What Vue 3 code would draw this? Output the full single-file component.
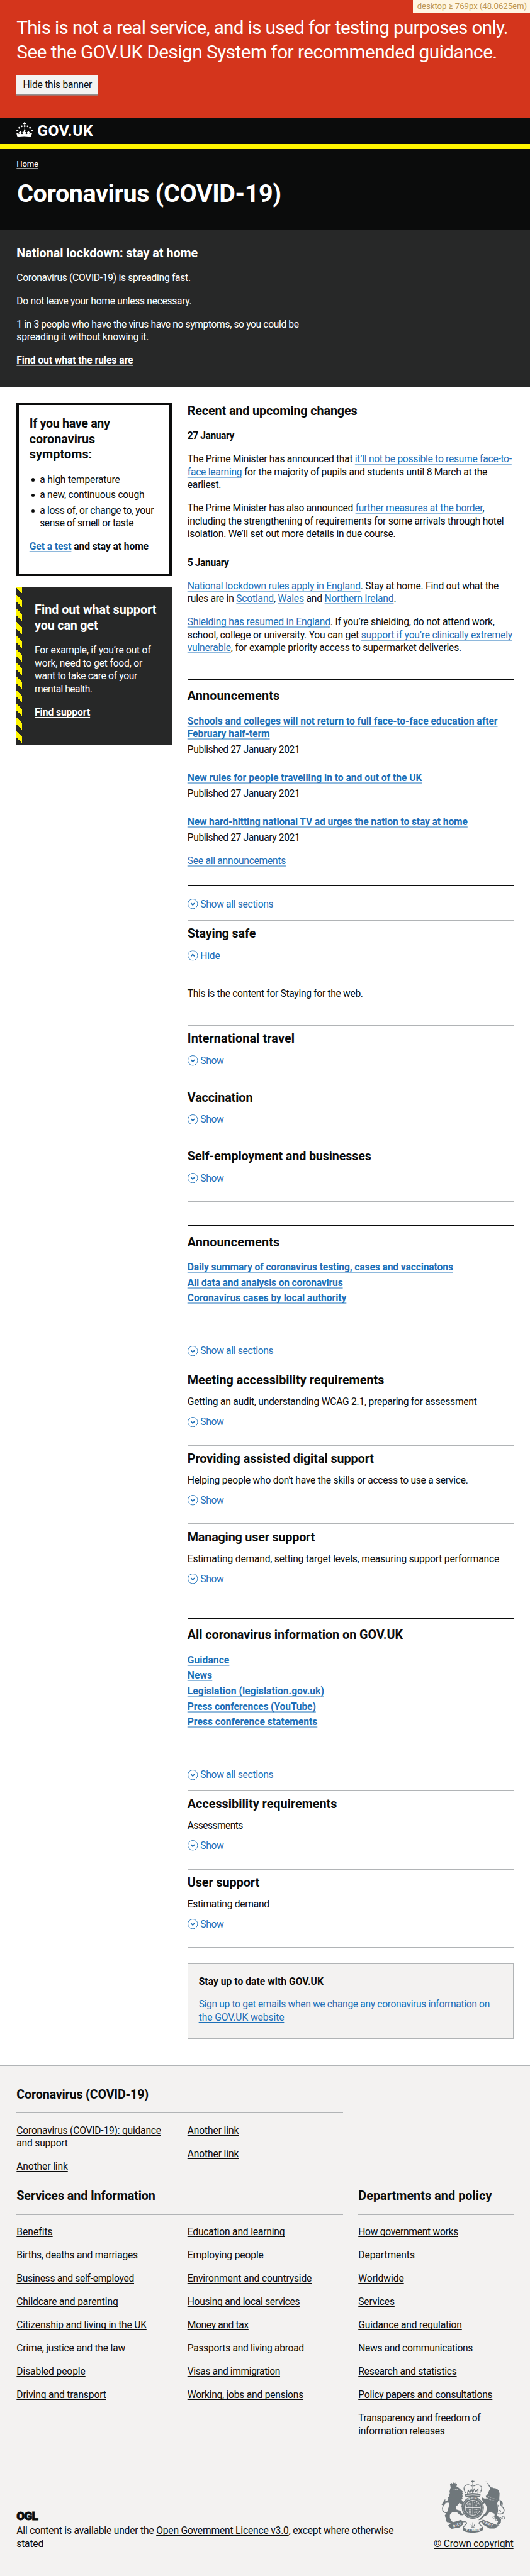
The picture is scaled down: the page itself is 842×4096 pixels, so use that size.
<script setup>
// Tracks a line of text so that it sets to a given measure (in design units, 10 to the rem).
const vFit = {
  mounted(el, binding) {
    const unit = parseFloat(getComputedStyle(document.documentElement).fontSize) / 10
    const natural = el.getBoundingClientRect().width
    const spacing = (binding.value * unit - natural) / el.textContent.trim().length
    el.style.letterSpacing = spacing.toFixed(3) + 'px'
  },
}

const announcements = [
  { lines: [['Schools and colleges will not return to full face-to-face education after', 599], ['February half-term', 159]] },
  { lines: [['New rules for people travelling in to and out of the UK', 453]] },
  { lines: [['New hard-hitting national TV ad urges the nation to stay at home', 541]] },
]

const groups = [
  {
    kind: 'first',
    sections: [
      { title: ['Staying safe', 132], open: true, content: ['This is the content for Staying for the web.', 339] },
      { title: ['International travel', 207] },
      { title: ['Vaccination', 126] },
      { title: ['Self-employment and businesses', 355] },
    ],
  },
  {
    kind: 'second',
    heading: ['Announcements', 178],
    links: [
      ['Daily summary of coronavirus testing, cases and vaccinatons', 513],
      ['All data and analysis on coronavirus', 300],
      ['Coronavirus cases by local authority', 307],
    ],
    sections: [
      { title: ['Meeting accessibility requirements', 380], summary: ['Getting an audit, understanding WCAG 2.1, preparing for assessment', 559] },
      { title: ['Providing assisted digital support', 360], summary: ["Helping people who don't have the skills or access to use a service.", 542] },
      { title: ['Managing user support', 246], summary: ['Estimating demand, setting target levels, measuring support performance', 602] },
    ],
  },
  {
    kind: 'third',
    heading: ['All coronavirus information on GOV.UK', 416],
    links: [
      ['Guidance', 81],
      ['News', 48],
      ['Legislation (legislation.gov.uk)', 264],
      ['Press conferences (YouTube)', 248],
      ['Press conference statements', 251],
    ],
    sections: [
      { title: ['Accessibility requirements', 289], summary: ['Assessments', 107] },
      { title: ['User support', 139], summary: ['Estimating demand', 158] },
    ],
  },
]

const covidLinks = [
  [[['Coronavirus (COVID-19): guidance', 279], ['and support', 99]], [['Another link', 99]]],
  [[['Another link', 99]], [['Another link', 99]]],
]

const serviceLinks = [
  [
    ['Benefits', 69], ['Births, deaths and marriages', 234], ['Business and self-employed', 227], ['Childcare and parenting', 196],
    ['Citizenship and living in the UK', 251], ['Crime, justice and the law', 210], ['Disabled people', 133], ['Driving and transport', 173],
  ],
  [
    ['Education and learning', 188], ['Employing people', 147], ['Environment and countryside', 240], ['Housing and local services', 217],
    ['Money and tax', 118], ['Passports and living abroad', 225], ['Visas and immigration', 179], ['Working, jobs and pensions', 224],
  ],
]

const departmentLinks = [
  [['How government works', 193]], [['Departments', 109]], [['Worldwide', 88]], [['Services', 70]],
  [['Guidance and regulation', 200]], [['News and communications', 221]], [['Research and statistics', 190]],
  [['Policy papers and consultations', 259]], [['Transparency and freedom of', 236], ['information releases', 167]],
]
</script>

<template>
  <div class="page">
    <div class="breakpoint"><span v-fit="212">desktop ≥ 769px (48.0625em)</span></div>

    <div class="banner">
      <p>
        <span v-fit="949" class="line">This is not a real service, and is used for testing purposes only.</span>
        <span v-fit="928" class="line">See the <a>GOV.UK Design System</a> for recommended guidance.</span>
      </p>
      <button type="button"><span v-fit="133">Hide this banner</span></button>
    </div>

    <header class="header">
      <svg class="crown" viewBox="96 77 96 90" aria-hidden="true">
        <g fill="#fff">
          <path d="M141 77h6l-1 6 7-1v7l-7-1 1 8h-6l1-8-7 1v-7l7 1z" />
          <circle cx="144" cy="101" r="5.5" />
          <circle cx="127" cy="102" r="5.3" /><circle cx="113" cy="111" r="5.3" /><circle cx="102" cy="126" r="5.3" />
          <circle cx="161" cy="102" r="5.3" /><circle cx="175" cy="111" r="5.3" /><circle cx="186" cy="126" r="5.3" />
          <circle cx="144" cy="112" r="3.6" /><circle cx="144" cy="124" r="5" />
          <path d="M96 139q5 3 10 0l4 8q4-1 4-6l-4-4q5-1 6-8h5q1 7 6 8l-4 4q1 6 6 6t7-6l-5 1v-8l6 1 1-4h8l1 4 6-1v8l-5-1q2 6 7 6t6-6l-4-4q5-1 6-8h5q1 7 6 8l-4 4q0 5 4 6l4-8q5 3 10 0l-9 27q-38-6-77 0z" />
        </g>
      </svg>
      <span v-fit="108" class="logotype">GOV.UK</span>
    </header>

    <div class="title">
      <a v-fit="42" class="crumb">Home</a>
      <h1><span v-fit="510">Coronavirus (COVID-19)</span></h1>
    </div>

    <section class="hero">
      <h2><span v-fit="350">National lockdown: stay at home</span></h2>
      <p><span v-fit="336">Coronavirus (COVID-19) is spreading fast.</span></p>
      <p><span v-fit="338">Do not leave your home unless necessary.</span></p>
      <p>
        <span v-fit="545" class="line">1 in 3 people who have the virus have no symptoms, so you could be</span>
        <span v-fit="255" class="line">spreading it without knowing it.</span>
      </p>
      <p class="strong"><a v-fit="225">Find out what the rules are</a></p>
    </section>

    <main class="main">
      <aside>
        <section class="symptoms">
          <h2>
            <span v-fit="155.5" class="line">If you have any</span>
            <span v-fit="127" class="line">coronavirus</span>
            <span v-fit="121" class="line">symptoms:</span>
          </h2>
          <ul>
            <li><span v-fit="155" class="line">a high temperature</span></li>
            <li><span v-fit="202" class="line">a new, continuous cough</span></li>
            <li>
              <span v-fit="220" class="line">a loss of, or change to, your</span>
              <span v-fit="181" class="line">sense of smell or taste</span>
            </li>
          </ul>
          <p class="strong"><span v-fit="230" class="line"><a class="link">Get a test</a> and stay at home</span></p>
        </section>

        <section class="support">
          <h2>
            <span v-fit="235" class="line">Find out what support</span>
            <span v-fit="122" class="line">you can get</span>
          </h2>
          <p>
            <span v-fit="224" class="line">For example, if you’re out of</span>
            <span v-fit="208" class="line">work, need to get food, or</span>
            <span v-fit="198" class="line">want to take care of your</span>
            <span v-fit="111" class="line">mental health.</span>
          </p>
          <p class="strong"><a v-fit="107">Find support</a></p>
        </section>
      </aside>

      <div class="content">
        <section class="changes">
          <h2><span v-fit="328">Recent and upcoming changes</span></h2>
          <h3><span v-fit="90">27 January</span></h3>
          <p>
            <span v-fit="626" class="line">The Prime Minister has announced that <a class="link">it’ll not be possible to resume face-to-</a></span>
            <span v-fit="579" class="line"><a class="link">face learning</a> for the majority of pupils and students until 8 March at the</span>
            <span v-fit="65" class="line">earliest.</span>
          </p>
          <p>
            <span v-fit="573" class="line">The Prime Minister has also announced <a class="link">further measures at the border</a>,</span>
            <span v-fit="611" class="line">including the strengthening of requirements for some arrivals through hotel</span>
            <span v-fit="402" class="line">isolation. We’ll set out more details in due course.</span>
          </p>
          <h3 class="later"><span v-fit="80">5 January</span></h3>
          <p>
            <span v-fit="601" class="line"><a class="link">National lockdown rules apply in England</a>. Stay at home. Find out what the</span>
            <span v-fit="403" class="line">rules are in <a class="link">Scotland</a>, <a class="link">Wales</a> and <a class="link">Northern Ireland</a>.</span>
          </p>
          <p>
            <span v-fit="593" class="line"><a class="link">Shielding has resumed in England</a>. If you’re shielding, do not attend work,</span>
            <span v-fit="627.5" class="line">school, college or university. You can get <a class="link">support if you’re clinically extremely</a></span>
            <span v-fit="529" class="line"><a class="link">vulnerable</a>, for example priority access to supermarket deliveries.</span>
          </p>
        </section>

        <section class="announcements">
          <h2><span v-fit="178">Announcements</span></h2>
          <ul>
            <li v-for="item in announcements" :key="item.lines[0][0]">
              <a class="link strong">
                <span v-for="line in item.lines" :key="line[0]" v-fit="line[1]" class="line">{{ line[0] }}</span>
              </a>
              <p><span v-fit="217">Published 27 January 2021</span></p>
            </li>
          </ul>
          <p class="all"><a v-fit="190" class="link">See all announcements</a></p>
        </section>

        <section v-for="group in groups" :key="group.kind" class="group" :class="group.kind">
          <template v-if="group.heading">
            <h2><span v-fit="group.heading[1]">{{ group.heading[0] }}</span></h2>
            <ul class="group-links">
              <li v-for="link in group.links" :key="link[0]"><a v-fit="link[1]" class="link strong">{{ link[0] }}</a></li>
            </ul>
          </template>

          <div class="toggle">
            <svg viewBox="0 0 20 20" aria-hidden="true"><circle cx="10" cy="10" r="9.4" /><path d="M6.6 8.6 10 12l3.4-3.4" /></svg>
            <span v-fit="141">Show all sections</span>
          </div>

          <div class="accordion">
            <article v-for="section in group.sections" :key="section.title[0]">
              <h2><span v-fit="section.title[1]">{{ section.title[0] }}</span></h2>
              <p v-if="section.summary" class="summary"><span v-fit="section.summary[1]">{{ section.summary[0] }}</span></p>
              <div class="toggle" :class="{ open: section.open }">
                <svg viewBox="0 0 20 20" aria-hidden="true"><circle cx="10" cy="10" r="9.4" /><path d="M6.6 8.6 10 12l3.4-3.4" /></svg>
                <span v-fit="section.open ? 38 : 45">{{ section.open ? 'Hide' : 'Show' }}</span>
              </div>
              <p v-if="section.open" class="panel"><span v-fit="section.content[1]">{{ section.content[0] }}</span></p>
            </article>
          </div>
        </section>

        <section class="signup">
          <h3><span v-fit="241">Stay up to date with GOV.UK</span></h3>
          <p>
            <a>
              <span v-fit="562" class="line">Sign up to get emails when we change any coronavirus information on</span>
              <span v-fit="165" class="line">the GOV.UK website</span>
            </a>
          </p>
        </section>
      </div>
    </main>

    <footer class="footer">
      <nav class="columns">
        <div class="wide">
          <h2><span v-fit="255">Coronavirus (COVID-19)</span></h2>
          <div class="lists">
            <ul v-for="(column, c) in covidLinks" :key="c">
              <li v-for="(link, i) in column" :key="i">
                <a><span v-for="line in link" :key="line[0]" v-fit="line[1]" class="line">{{ line[0] }}</span></a>
              </li>
            </ul>
          </div>
        </div>
      </nav>
      <nav class="columns">
        <div class="wide">
          <h2><span v-fit="268">Services and Information</span></h2>
          <div class="lists">
            <ul v-for="(column, c) in serviceLinks" :key="c">
              <li v-for="link in column" :key="link[0]"><a v-fit="link[1]" class="line">{{ link[0] }}</a></li>
            </ul>
          </div>
        </div>
        <div class="narrow">
          <h2><span v-fit="258">Departments and policy</span></h2>
          <ul>
            <li v-for="(link, i) in departmentLinks" :key="i">
              <a><span v-for="line in link" :key="line[0]" v-fit="line[1]" class="line">{{ line[0] }}</span></a>
            </li>
          </ul>
        </div>
      </nav>

      <div class="meta">
        <div class="licence">
          <span v-fit="41" class="ogl">OGL</span>
          <p>
            <span v-fit="728" class="line">All content is available under the <a>Open Government Licence v3.0</a>, except where otherwise</span>
            <span v-fit="52" class="line">stated</span>
          </p>
        </div>
        <div class="copyright">
          <svg class="arms" viewBox="66 36 375 307" aria-hidden="true">
            <g fill="#6f777b">
              <path d="M246 36h6v6h6v6h-6v8h-6v-8h-6v-6h6z" />
              <path d="M116 58l6 5 3-9 6 5 4-10 6 9 7-6 1 10 9-4-4 20-33 5z" />
              <path d="M120 82q8-6 22-6 20 0 29 10l22 20-6 3 7 10-7 2 6 12-8 1 6 14-8-1 4 12 10 9q6 14-4 30l-10-5 2-14-14-9q-8 14-18 19l-2 18 25 8 9 16 12 5-4 6-18-1-20-18-27 2-12 14 0 18 12 20 14 7-8 7-25-3-14-12-4-22-5-10 14-22 9-28 3-22-7-5-12 4-8-8 14-5 8-10-1-10 8-8-5-9 7-7-2-11z" />
              <path d="M323 42l36 42-7 6z" />
              <path d="M350 88l10-10 6 6q22-2 32 14l6 16-2 34-8 14-6 16-30-6-22-16-2-22-8 2-3-9 14-8 5-18z" />
              <path d="M300 137l18 8 14-2 12 16 44 12 5 18 2 28-6 26 14 12 10 8-2 22-14 12-10 0 8-20-20-22 0-22-28-12-14 18-20 10-16 18-16 3 22-24 22-20 6-28-12-28-11 6-6-10 8-7-10-8z" />
              <path d="M104 302l24-18 52-16 12 8 2 18-22 18-46 8z" />
              <path d="M306 266l48 18 36 14 14 2-30 18-28 0-38-22-8-14z" />
              <path d="M190 314q58 22 116 0l4 12q-16 15-62 17-44-2-56-15z" />
              <circle cx="249" cy="198" r="64" />
              <path d="M204 118q44-12 90 0l-2 16h-86z" />
            </g>
            <g fill="none" stroke="#6f777b" stroke-width="5">
              <path d="M121 208q-3 20-26 20-22-2-22-26 0-12 11-24 9-11 1-20" />
              <path d="M393 232q26 8 35-9 8-18-12-34-10-11-4-24" />
              <path d="M209 112q-18-23-7-38 16-17 43-2M289 112q18-23 7-38-16-17-43-2" stroke-dasharray="7 2" />
              <path d="M249 60v56M218 116l4-20 10 16 8-22 9 22 8-22 10 16 12-16v26" />
              <path d="M190 280q26-6 22 12-12 8-20 22M308 280q-26-6-22 12 12 8 20 22" />
              <path d="M249 282v30M238 294q4 16 11 8 7 8 11-8M240 310h18" stroke-width="4" />
            </g>
            <path d="M68 180l22-36-2 28-11 12zM403 150q22 10 20 34l-16-8z" fill="#6f777b" />
            <path d="M94 170l-7 16M415 174l10 12M108 282l12 12" stroke="#f3f2f1" stroke-width="3" />
            <circle cx="249" cy="198" r="58" fill="none" stroke="#f3f2f1" stroke-width="1.5" />
            <circle cx="249" cy="198" r="44" fill="none" stroke="#f3f2f1" stroke-width="3" />
            <path d="M249 154v88M205 198h88" stroke="#f3f2f1" stroke-width="3" />
            <g stroke="#f3f2f1" stroke-width="2.4" fill="none">
              <path d="M217 172h24M215 181h26M219 189h22M257 168l18 20M259 188l22-18M270 164v28M216 206h25M221 206v20M228 206v26M235 206v28M258 209h24M258 218h22M257 227h16" stroke-dasharray="7 2" />
              <path d="M333 128q20 14 52 20M325 138q22 16 56 20" stroke-dasharray="6 3" />
              <path d="M144 90l7 5 10-3M132 88l6 2" />
              <path d="M210 126q39-8 78 0" />
              <path d="M209 258q40 18 80 0" stroke-dasharray="10 5" />
            </g>
            <g fill="none" stroke="#6f777b" stroke-width="3">
              <circle cx="393" cy="188" r="6" /><circle cx="405" cy="218" r="6" /><circle cx="371" cy="253" r="6" />
              <circle cx="388" cy="267" r="7" /><circle cx="408" cy="259" r="7" /><circle cx="426" cy="256" r="8" />
              <circle cx="332" cy="136" r="5" /><circle cx="399" cy="286" r="6" />
            </g>
            <g fill="#f3f2f1" font-family="Roboto, sans-serif" font-weight="700">
              <text x="211" y="335" font-size="20" textLength="80">ET MON</text>
              <text transform="translate(138 312) rotate(-22)" font-size="19" textLength="50">DIEU</text>
              <text transform="translate(307 284) rotate(26)" font-size="19" textLength="60">DROIT</text>
              <text transform="translate(222 152) rotate(-8)" font-size="15" textLength="44">QUI</text>
            </g>
          </svg>
          <a v-fit="154">© Crown copyright</a>
        </div>
      </div>
    </footer>
  </div>
</template>

<style>
html {
  font-size: 8.2265px;
}
body {
  background: #f3f2f1;
}
</style>

<style scoped>
.page {
  position: relative;
  width: 842px;
  background: #fff;
  color: #0b0c0c;
  font-family: Roboto, "Liberation Sans", sans-serif;
  font-size: 1.9rem;
  line-height: 2.5rem;
  white-space: nowrap;
  text-decoration-skip-ink: none;
}
h1, h2, h3, p, ul {
  margin: 0;
  padding: 0;
}
ul {
  list-style: none;
}
h2 {
  font-size: 2.4rem;
  line-height: 3rem;
  font-weight: 700;
}
h3 {
  font-size: 1.9rem;
  line-height: 2.5rem;
  font-weight: 700;
}
svg {
  display: block;
}
a {
  color: inherit;
  text-decoration: underline;
  text-decoration-thickness: 1px;
  text-underline-offset: 0.25rem;
}
.line {
  display: block;
  width: max-content;
}
.strong {
  font-weight: 700;
}
.link {
  color: #1d70b8;
  text-decoration-color: #8eb8dc;
  text-decoration-thickness: 2px;
  text-underline-offset: 0.2rem;
}
.breakpoint {
  position: absolute;
  top: 0;
  right: 0;
  box-sizing: border-box;
  width: 22.6rem;
  height: 2.6rem;
  padding-left: 0.8rem;
  background: #fff6e3;
  color: #c09853;
  font-size: 1.6rem;
  line-height: 2.5rem;
}
.banner {
  box-sizing: border-box;
  height: 22.85rem;
  padding: 3rem 3.2rem 0;
  background: #d4351c;
  color: #fff;
}
.banner p {
  font-size: 3.6rem;
  line-height: 4.8rem;
}
.banner button {
  display: block;
  width: 15.8rem;
  height: 3.8rem;
  margin-top: 1.85rem;
  padding: 0;
  border: 0;
  background: #f3f2f1;
  box-shadow: 0 0.2rem 0 #929191;
  color: #0b0c0c;
  font: 1.9rem/3.8rem Roboto, sans-serif;
}
.header {
  display: flex;
  gap: 0.8rem;
  box-sizing: border-box;
  height: 6rem;
  padding: 0.7rem 3.2rem 0;
  border-bottom: 1rem solid #fff500;
  background: #0b0c0c;
  color: #fff;
}
.crown {
  width: 3.2rem;
  height: 3rem;
}
.logotype {
  height: 3rem;
  font-size: 3rem;
  line-height: 3.5rem;
  font-weight: 700;
}
.title {
  box-sizing: border-box;
  height: 15.5rem;
  padding: 1.85rem 3.2rem 0;
  background: #0b0c0c;
  color: #fff;
}
.crumb {
  display: block;
  width: max-content;
  font-size: 1.6rem;
  line-height: 2rem;
}
.title h1 {
  margin-top: 2.15rem;
  padding-left: 0.1rem;
  font-size: 4.8rem;
  line-height: 5rem;
  font-weight: 700;
}
.crumb,
.hero a {
  text-decoration-color: #9a9b9b;
  text-decoration-thickness: 2px;
  text-underline-offset: 0.2rem;
}
.hero {
  box-sizing: border-box;
  height: 30.5rem;
  padding: 3.15rem 3.2rem 0;
  background: #272828;
  color: #fff;
}
.hero p {
  margin-top: 2rem;
}
.main {
  display: grid;
  grid-template-columns: 30rem 63rem;
  gap: 3rem;
  align-items: start;
  padding: 3rem 3.2rem 5.05rem;
}
.symptoms {
  box-sizing: border-box;
  height: 33.55rem;
  padding: 2.15rem 2rem 0;
  border: 0.5rem solid #0b0c0c;
}
.symptoms li {
  position: relative;
  margin-top: 0.5rem;
  padding-left: 2rem;
}
.symptoms ul {
  margin-top: 2rem;
}
.symptoms li:first-child {
  margin-top: 0;
}
.symptoms li::before {
  content: "";
  position: absolute;
  top: 0.95rem;
  left: 0.4rem;
  width: 0.65rem;
  height: 0.65rem;
  border-radius: 50%;
  background: #0b0c0c;
}
.symptoms p {
  margin-top: 2rem;
}
.support {
  box-sizing: border-box;
  height: 30.5rem;
  margin-top: 2rem;
  padding: 3.1rem 2rem 0 3.5rem;
  background: linear-gradient(#272828, #272828) 1rem 0 no-repeat,
    repeating-linear-gradient(-135deg, #fff500 0 0.93rem, #272828 0.93rem 1.86rem);
  color: #fff;
}
.support p {
  margin-top: 2rem;
}
.support a {
  text-decoration-thickness: 1px;
}
.content {
  padding-top: 0.2rem;
}
.changes {
  padding-bottom: 4.77rem;
}
.changes h3,
.changes p {
  margin-top: 2rem;
}
.changes h3.later {
  margin-top: 3rem;
}
.announcements {
  padding-top: calc(1.85rem - 2px);
  padding-bottom: 3.35rem;
  border-top: 2px solid #0b0c0c;
}
.announcements li {
  margin-top: 3rem;
}
.announcements li:first-child {
  margin-top: 2.05rem;
}
.announcements li p {
  margin-top: 0.5rem;
}
.announcements .all {
  margin-top: 2rem;
}
.group {
  border-top: 2px solid #0b0c0c;
}
.group.first {
  padding-top: calc(2.54rem - 2px);
}
.group.second,
.group.third {
  padding-top: calc(1.88rem - 2px);
}
.group.second {
  margin-top: 4.5rem;
}
.group.third {
  margin-top: 3rem;
}
.group-links {
  margin: 2.05rem 0 7.7rem;
}
.group-links li + li {
  margin-top: 0.5rem;
}
.toggle {
  display: flex;
  align-items: center;
  gap: 0.5rem;
  height: 2.5rem;
  color: #1d70b8;
}
.toggle svg {
  width: 2rem;
  height: 2rem;
  margin-bottom: 0.2rem;
  fill: none;
  stroke: #1d70b8;
}
.toggle circle {
  stroke-width: 1.1;
}
.toggle path {
  stroke-width: 2.2;
}
.toggle.open svg {
  transform: rotate(180deg);
}
.accordion {
  margin-top: 1.71rem;
  border-bottom: 1px solid #b1b4b6;
}
.accordion article {
  padding: calc(1.27rem - 1px) 0 3.14rem;
  border-top: 1px solid #b1b4b6;
}
.accordion .toggle {
  margin-top: 1.45rem;
}
.accordion .summary {
  margin-top: 1.35rem;
}
.accordion .summary + .toggle {
  margin-top: 1.4rem;
}
.accordion .panel {
  margin: 4.83rem 0 1.66rem;
}
.signup {
  box-sizing: border-box;
  height: 14.65rem;
  margin-top: 3rem;
  padding: 2.15rem 2.05rem 0;
  border: 1px solid #b1b4b6;
  background: #f3f2f1;
}
.signup p {
  margin-top: 1.95rem;
  color: #1d70b8;
}
.footer {
  box-sizing: border-box;
  padding: 4.15rem 3.2rem 4.95rem;
  border-top: 1px solid #b1b4b6;
  background: #f3f2f1;
}
.columns {
  display: grid;
  grid-template-columns: 63rem 30rem;
  gap: 3rem;
}
.columns + .columns {
  margin-top: 3rem;
  padding-bottom: 2.9rem;
  border-bottom: 1px solid #b1b4b6;
}
.columns h2 {
  margin-bottom: 2.1rem;
  padding-bottom: 1.9rem;
  border-bottom: 1px solid #b1b4b6;
}
.lists {
  display: grid;
  grid-template-columns: 30rem 30rem;
  gap: 3rem;
}
.columns li + li {
  margin-top: 2rem;
}
.meta {
  display: flex;
  justify-content: space-between;
  align-items: flex-end;
  margin-top: 5.05rem;
}
.ogl {
  display: block;
  width: max-content;
  height: 1.7rem;
  margin-bottom: 0.85rem;
  font-size: 2.3rem;
  line-height: 1.75rem;
  font-weight: 900;
  -webkit-text-stroke: 0.1rem #0b0c0c;
}
.copyright {
  text-align: right;
}
.arms {
  width: 12.5rem;
  height: 10.25rem;
  margin: 0 0 1rem 1.4rem;
}
</style>
